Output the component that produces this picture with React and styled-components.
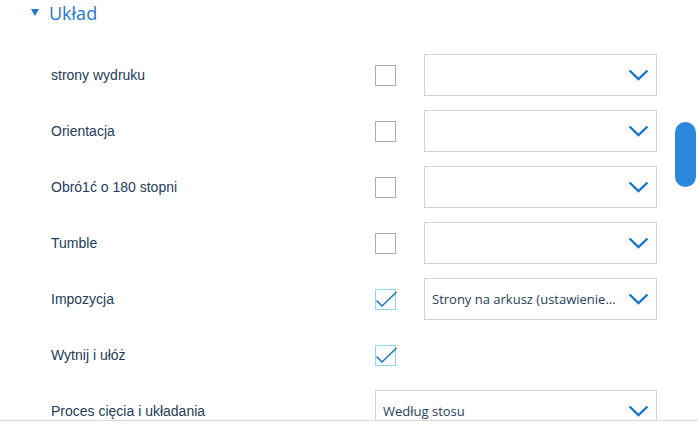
import { Fragment } from "react"
import styled, { createGlobalStyle } from "styled-components"

const Global = createGlobalStyle`
  html, body { margin: 0; padding: 0; background: #fff; }
  body { font-family: "Liberation Sans", Arial, sans-serif; }
`

const Panel = styled.div`
  position: relative;
  width: 698px;
  height: 420px;
  overflow: hidden;
  border-bottom: 1px solid #d6d6d6;
`

const Header = styled.div`
  display: flex;
  align-items: center;
  gap: 10px;
  height: 26px;
  padding-left: 31px;
  margin-bottom: 21px;
  color: #1f7ad3;
  font-family: "Segoe UI", "Open Sans", sans-serif;
  font-size: 18px;
`

const Triangle = styled.span`
  width: 0;
  height: 0;
  border-left: 4.5px solid transparent;
  border-right: 4.5px solid transparent;
  border-top: 7px solid #1f7ad3;
  margin-top: -2px;
`

const Rows = styled.div`
  display: grid;
  grid-template-columns: 296px 21px 233px;
  column-gap: 28px;
  grid-auto-rows: 56px;
  align-items: center;
  padding-left: 51px;
`

const Label = styled.div`
  font-size: 14px;
  color: #243c5a;
`

const Box = styled.div`
  width: 21px;
  height: 21px;
  box-sizing: border-box;
  border: 1px solid ${p => (p.$checked ? "#93d6ea" : "#a9adad")};
  position: relative;
  svg { position: absolute; left: -1px; top: -1px; overflow: visible; }
`

const Select = styled.div`
  grid-column: ${p => (p.$wide ? "2 / span 2" : "3")};
  height: 42px;
  box-sizing: border-box;
  border: 1px solid #d2d2d2;
  display: flex;
  align-items: center;
  justify-content: space-between;
  gap: 10px;
  padding: 0 7px 0 7px;
  font-family: "Segoe UI", "Open Sans", sans-serif;
  font-size: 13px;
  color: #263d5c;
  white-space: nowrap;
`

const Scroll = styled.div`
  position: absolute;
  right: 2px;
  top: 122px;
  width: 21px;
  height: 65px;
  border-radius: 11px;
  background: #2b88da;
`

const Chevron = () => (
  <svg width="21" height="12" viewBox="0 0 21 12" style={{ flexShrink: 0 }}>
    <path d="M1.5 1.5 L10.5 10 L19.5 1.5" fill="none" stroke="#1b74cc" strokeWidth="2.4" />
  </svg>
)

const Check = ({ checked }) => (
  <Box $checked={checked}>
    {checked && (
      <svg width="21" height="21" viewBox="0 0 21 21">
        <path d="M1.5 11.5 L7 17 L21.5 3" fill="none" stroke="#1b74cc" strokeWidth="1.6" />
      </svg>
    )}
  </Box>
)

const rows = [
  { label: "strony wydruku", checked: false, value: "" },
  { label: "Orientacja", checked: false, value: "" },
  { label: "Obró1ć o 180 stopni", checked: false, value: "" },
  { label: "Tumble", checked: false, value: "" },
  { label: "Impozycja", checked: true, value: "Strony na arkusz (ustawienie..." },
  { label: "Wytnij i ułóż", checked: true, noSelect: true },
]

export default function App() {
  return (
    <>
      <Global />
      <Panel>
        <Header>
          <Triangle />
          Układ
        </Header>
        <Rows>
          {rows.map(r => (
            <Fragment key={r.label}>
              <Label>{r.label}</Label>
              <Check checked={r.checked} />
              {r.noSelect ? <div /> : (
                <Select>
                  <span>{r.value}</span>
                  <Chevron />
                </Select>
              )}
            </Fragment>
          ))}
          <Label>Proces cięcia i układania</Label>
          <Select $wide>
            <span>Według stosu</span>
            <Chevron />
          </Select>
        </Rows>
        <Scroll />
      </Panel>
    </>
  )
}
